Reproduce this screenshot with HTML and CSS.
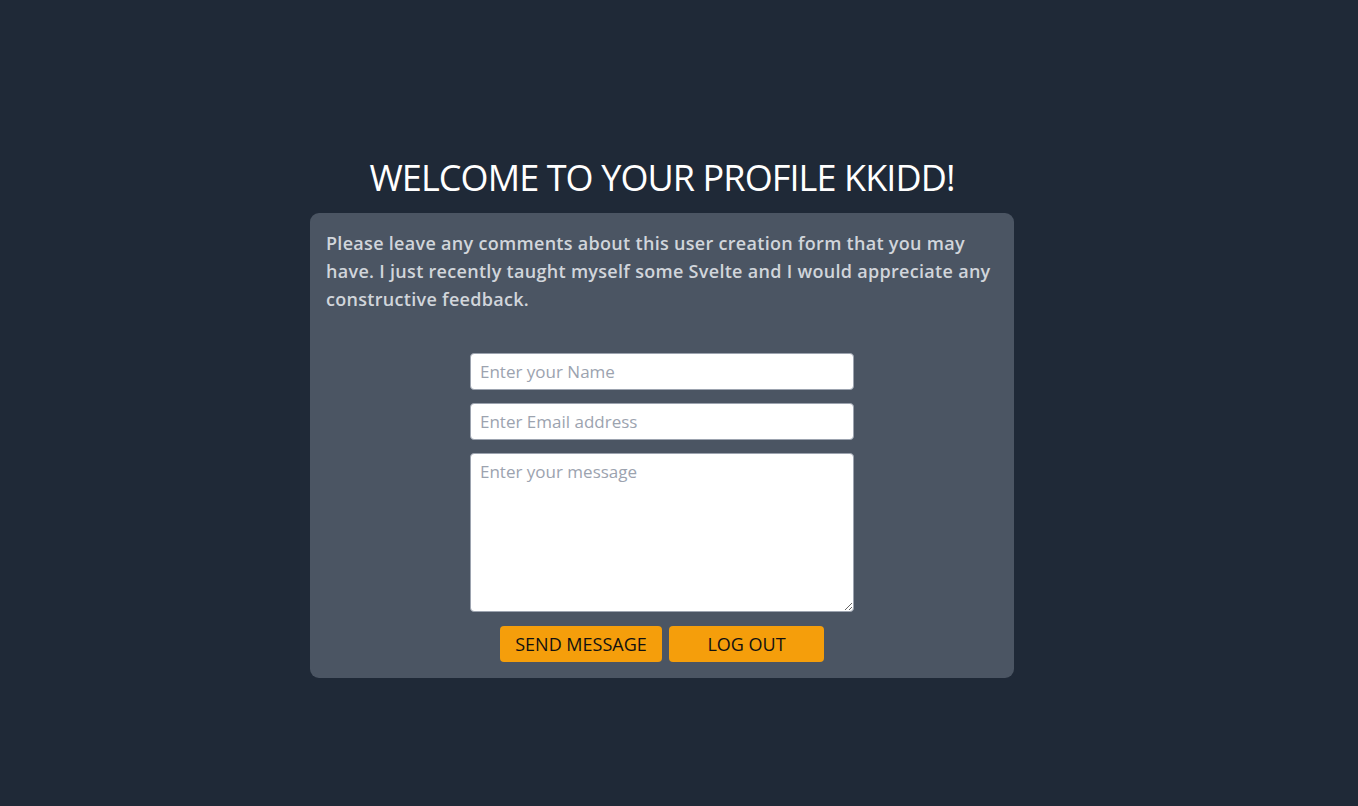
FILE: index.html
```html
<!DOCTYPE html>
<html>
<head>
<meta charset="utf-8">
<link rel="stylesheet" href="styles.css">
</head>
<body>
<main class="page">
  <h1 class="title">WELCOME TO YOUR PROFILE KKIDD!</h1>
  <section class="card">
    <p class="intro">Please leave any comments about this user creation form that you may have. I just recently taught myself some Svelte and I would appreciate any constructive feedback.</p>
    <form class="form">
      <input class="field" type="text" placeholder="Enter your Name">
      <input class="field" type="email" placeholder="Enter Email address">
      <textarea class="field area" placeholder="Enter your message"></textarea>
      <div class="actions">
        <button type="button" class="btn btn-send">SEND MESSAGE</button>
        <button type="button" class="btn btn-out">LOG OUT</button>
      </div>
    </form>
  </section>
</main>
</body>
</html>
```

FILE: styles.css
```css
* { box-sizing: border-box; }
html, body { margin: 0; height: 100%; }
body {
  background: #1f2937;
  font-family: "Open Sans", "Noto Sans", sans-serif;
}
.page {
  display: flex;
  flex-direction: column;
  align-items: center;
  padding-top: 156px;
  padding-right: 34px;
}
.title {
  margin: 0 0 13px;
  font-size: 36px;
  line-height: 44px;
  font-weight: 400;
  color: #ffffff;
  letter-spacing: -0.9px;
}
.card {
  width: 704px;
  background: #4b5563;
  border-radius: 9px;
  padding: 16px;
}
.intro {
  margin: 0;
  color: #d1d5db;
  font-size: 18px;
  line-height: 28px;
  font-weight: 600;
  letter-spacing: 0.3px;
}
.form {
  display: flex;
  flex-direction: column;
  align-items: center;
  gap: 13px;
  margin-top: 40px;
}
.field {
  width: 384px;
  height: 37px;
  border: 1px solid #9ca3af;
  border-radius: 4px;
  background: #fff;
  padding: 0 9px;
  font-family: inherit;
  font-size: 17px;
  color: #111827;
  outline: none;
}
.field::placeholder { color: #9ca3af; }
.area {
  height: 159px;
  padding: 6px 9px;
  resize: vertical;
  line-height: 24px;
}
.actions {
  display: flex;
  gap: 7px;
  margin-top: 1px;
}
.btn {
  height: 36px;
  border: none;
  border-radius: 4px;
  background: #f59e0b;
  color: #111;
  font-family: inherit;
  font-size: 18px;
  padding: 0;
  cursor: pointer;
}
.btn-send { width: 162px; }
.btn-out { width: 155px; }
```
